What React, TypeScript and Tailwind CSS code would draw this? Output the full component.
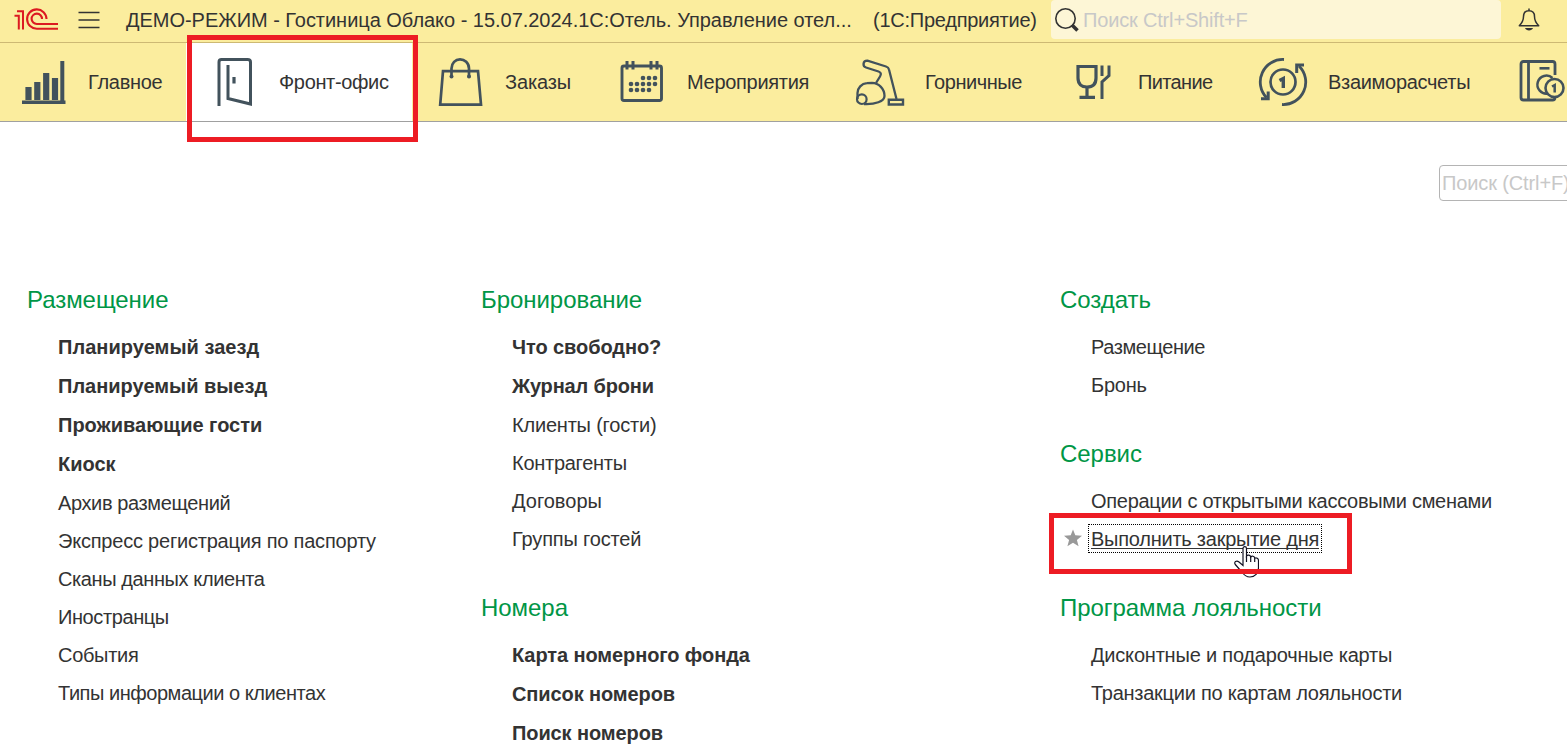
import type { ReactNode } from "react";

const ink = "#42525c";

type Tab = { label: string; width: string; icon: ReactNode; active?: boolean; text: string };

function Icon({ children }: { children?: ReactNode }) {
  return (
    <svg width="48" height="48" viewBox="0 0 48 48" fill="none" stroke={ink} strokeWidth="2" className="shrink-0 overflow-visible">
      {children}
    </svg>
  );
}

const tabs: Tab[] = [
  {
    label: "Главное",
    width: "w-[186px] pl-5",
    text: "ml-5 tracking-[-0.28px]",
    icon: (
      <Icon>
        <path d="M2 44.2H45.5" strokeWidth="3.6" />
        <path d="M42.3 3V46" strokeWidth="4" />
        <path d="M8.5 29V42M17.3 24V42M26.2 15V42M35 20V42" strokeWidth="6.2" />
      </Icon>
    ),
  },
  {
    label: "Фронт-офис",
    width: "w-[226px] pl-[25px]",
    text: "ml-5 tracking-[-0.35px]",
    active: true,
    icon: (
      <Icon>
        <path d="M8 48V4Q8 1.500 10.500 1.500H36.500Q39.500 1.500 39.500 4V46L17 40.500V7" strokeWidth="3" />
        <path d="M23 19V25.500" strokeWidth="3.200" />
      </Icon>
    ),
  },
  {
    label: "Заказы",
    width: "w-[182px] pl-[25px]",
    text: "ml-5 tracking-[-0.15px]",
    icon: (
      <Icon>
        <path d="M6 13.200H41L44 46.700H3.200Z" strokeWidth="2.700" />
        <path d="M14.500 19.500V10.500C14.500 5 18.500 1.300 23 1.300S32 5 32 10.500V19.500" strokeWidth="2.700" />
        <circle cx="14.500" cy="18.500" r="2" fill={ink} stroke="none" />
        <circle cx="32" cy="18.500" r="2" fill={ink} stroke="none" />
      </Icon>
    ),
  },
  {
    label: "Мероприятия",
    width: "w-[238px] pl-[25px]",
    text: "ml-5 tracking-[-0.3px]",
    icon: (
      <Icon>
        <rect x="3" y="8" width="39.500" height="34.500" rx="2" strokeWidth="2.900" />
        <path d="M8 3V11.500M14 3V11.500M32 3V11.500M38 3V11.500" strokeWidth="3" />
        {[
          [24, 20], [30, 20], [36, 20],
          [12, 26], [18, 26], [24, 26], [30, 26], [36, 26],
          [12, 32], [18, 32], [24, 32], [30, 32],
        ].map(([x, y]) => (
          <circle key={`${x}-${y}`} cx={x} cy={y} r="2.300" fill={ink} stroke="none" />
        ))}
      </Icon>
    ),
  },
  {
    label: "Горничные",
    width: "w-[213px] pl-[24px]",
    text: "ml-[21px] tracking-[-0.45px]",
    icon: (
      <Icon>
        <path d="M20 25L24 18.500C25.500 16 25 14.500 22.500 13.500L10 9.500C6.500 8.500 6.500 2.500 11.500 2.700L30 8.500Q32.500 9.300 33 11.500L40.500 41" strokeWidth="2.300" />
        <path d="M1.500 41V35C1.500 30 5.500 25.500 11 25.200L16 24.800C23 25 28.500 31 28.500 38C28.500 43.500 19 46.500 8 46" strokeWidth="2.300" />
        <circle cx="5.800" cy="41.200" r="4.800" strokeWidth="2.200" />
        <path d="M32.800 41.700H47V46.500H32.800Z" strokeWidth="2.400" />
      </Icon>
    ),
  },
  {
    label: "Питание",
    width: "w-[190px] pl-[25px]",
    text: "ml-5 tracking-[-0.65px]",
    icon: (
      <Icon>
        <path d="M8 8.500H26V20C26 26 22.500 29 17 29S8 26 8 20Z" strokeWidth="3.200" />
        <path d="M17 29V39M9.500 39.300H25" strokeWidth="3.200" />
        <path d="M32 7.500V18M39 7.500V17.500L32 24V41" strokeWidth="3" />
      </Icon>
    ),
  },
  {
    label: "Взаиморасчеты",
    width: "w-[259px] pl-[24px]",
    text: "ml-[21px] tracking-[-0.3px]",
    icon: (
      <Icon>
        <circle cx="24" cy="24" r="12.500" strokeWidth="2.700" />
        <path d="M25 1.500A22.500 22.500 0 0 0 7.500 39.500M23 46.500A22.500 22.500 0 0 0 40 8" strokeWidth="2.800" />
        <path d="M2 40.700H9.200V33.500" strokeWidth="3" />
        <path d="M37.700 15V7H45" strokeWidth="3" />
        <path d="M20.500 22.500L24.300 20.500V30" strokeWidth="3.400" />
      </Icon>
    ),
  },
  {
    label: "",
    width: "w-[73px] pl-[25px]",
    text: "",
    icon: (
      <Icon>
        <path d="M36 17V6Q36 3.500 33.500 3.500H4.500Q2 3.500 2 6V39.500Q2 42 4.500 42H33.500Q36 42 36 39.500V38M9.500 3.500V42" strokeWidth="2.800" />
        <path d="M20.500 10.300H30.500" strokeWidth="2.600" />
        <path d="M33.500 20A9 9 0 1 0 29 35.500" strokeWidth="2.500" />
        <circle cx="35.500" cy="30" r="9" fill="#fbed9e" strokeWidth="2.600" />
        <path d="M33 28.500L35.700 27V34.500" strokeWidth="2.500" />
      </Icon>
    ),
  },
];

type Item = { text: string; bold?: boolean; focused?: boolean; fit?: string };
type Group = { title: string; items: Item[] };

const columns: { width: string; groups: Group[] }[] = [
  {
    width: "w-[454px]",
    groups: [
      {
        title: "Размещение",
        items: [
          { text: "Планируемый заезд", bold: true, fit: "tracking-[0.04px]" },
          { text: "Планируемый выезд", bold: true },
          { text: "Проживающие гости", bold: true },
          { text: "Киоск", bold: true },
          { text: "Архив размещений", fit: "tracking-[-0.38px]" },
          { text: "Экспресс регистрация по паспорту", fit: "tracking-[-0.21px]" },
          { text: "Сканы данных клиента", fit: "tracking-[-0.4px]" },
          { text: "Иностранцы", fit: "tracking-[-0.4px]" },
          { text: "События", fit: "tracking-[-0.3px]" },
          { text: "Типы информации о клиентах", fit: "tracking-[-0.46px]" },
        ],
      },
    ],
  },
  {
    width: "w-[579px]",
    groups: [
      {
        title: "Бронирование",
        items: [
          { text: "Что свободно?", bold: true, fit: "tracking-[-0.08px]" },
          { text: "Журнал брони", bold: true, fit: "tracking-[-0.16px]" },
          { text: "Клиенты (гости)", fit: "tracking-[-0.2px]" },
          { text: "Контрагенты", fit: "tracking-[-0.27px]" },
          { text: "Договоры" },
          { text: "Группы гостей", fit: "tracking-[-0.16px]" },
        ],
      },
      {
        title: "Номера",
        items: [
          { text: "Карта номерного фонда", bold: true, fit: "tracking-[-0.09px]" },
          { text: "Список номеров", bold: true, fit: "tracking-[-0.1px]" },
          { text: "Поиск номеров", bold: true, fit: "tracking-[-0.1px]" },
        ],
      },
    ],
  },
  {
    width: "w-[507px]",
    groups: [
      {
        title: "Создать",
        items: [
          { text: "Размещение", fit: "tracking-[-0.43px]" },
          { text: "Бронь", fit: "tracking-[-0.2px]" },
        ],
      },
      {
        title: "Сервис",
        items: [
          { text: "Операции с открытыми кассовыми сменами", fit: "tracking-[-0.29px]" },
          { text: "Выполнить закрытие дня", focused: true },
        ],
      },
      {
        title: "Программа лояльности",
        items: [
          { text: "Дисконтные и подарочные карты", fit: "tracking-[-0.2px]" },
          { text: "Транзакции по картам лояльности", fit: "tracking-[-0.26px]" },
        ],
      },
    ],
  },
];

function Logo() {
  return (
    <svg width="46" height="24" viewBox="0 0 46 24" fill="none" stroke="#dc1a21" className="shrink-0">
      <path d="M0.500 7.800H4.800V21.500M3 3.200H9V21.500" strokeWidth="2" />
      <path d="M32.500 11A9.700 9.700 0 1 0 23 20.800H44" strokeWidth="2.100" />
      <path d="M28 11A5.200 5.200 0 1 0 23 16H44" strokeWidth="2.100" />
    </svg>
  );
}

function MenuItem({ item }: { item: Item }) {
  if (item.focused) {
    return (
      <li className="relative flex h-[38px] items-center">
        <svg width="18" height="18" viewBox="0 0 18 18" className="absolute -left-[27px] top-[9px]" fill="#999">
          <path d="M9 0.500L11.300 6.300L18 6.700L12.900 10.900L14.600 17.300L9 13.700L3.400 17.300L5.100 10.900L0 6.700L6.700 6.300Z" />
        </svg>
        <span className="relative whitespace-nowrap tracking-[-0.24px]">
          {item.text}
          <span className="absolute inset-x-0 top-[19px] h-px bg-[#333]" />
        </span>
        <span className="absolute -left-[3px] top-[4px] h-[29px] w-[234px] border border-dotted border-black" />
        <svg width="26" height="34" viewBox="0 0 26 34" className="absolute left-[142px] top-[25px]" fill="#fff" stroke="#111122" strokeWidth="1.200">
          <path d="M10 17V3.500C10 1 13.500 1 13.500 3.500V11C14.500 9.500 17.500 9.700 17.700 12C19 10.700 21.500 11 21.700 13.200C23.500 12.500 25.500 13.500 25.500 15.500V23C25.500 28 22 32 17 32C12.500 32 10.500 29.500 8.500 26.500L2.300 19.500C0.500 17 3.500 15 6 17L10 20.500Z" />
          <path d="M13.500 11V17M17.700 12V17M21.700 13.200V17" fill="none" />
        </svg>
        <span className="absolute -left-[42px] -top-[7px] h-[61px] w-[303px] border-[5px] border-[#ed1c24]" />
      </li>
    );
  }
  return (
    <li
      className={`flex items-center whitespace-nowrap ${item.bold ? "h-[39px] pb-[2px] font-bold" : "h-[38px]"} ${item.fit ?? ""}`}
    >
      {item.text}
    </li>
  );
}

export default function App() {
  return (
    <div className="h-[751px] w-[1567px] overflow-hidden bg-white font-['Liberation_Sans',Arial,sans-serif] text-[20px] leading-none text-[#333]">
      <header className="flex h-[43px] items-center border-b border-[#cdb974] bg-[#fbed9e] pb-[3px]">
        <div className="flex w-[126px] shrink-0 items-center pl-[14px]">
          <Logo />
          <svg width="22" height="18" viewBox="0 0 22 18" stroke="#333" strokeWidth="1.500" className="ml-[18px]">
            <path d="M0.500 1.500H21.500M0.500 9H21.500M0.500 16.500H21.500" />
          </svg>
        </div>
        <div className="w-[747px] shrink-0 whitespace-nowrap tracking-[-0.03px]">
          ДЕМО-РЕЖИМ - Гостиница Облако - 15.07.2024.1С:Отель. Управление отел...
        </div>
        <div className="w-[178px] shrink-0 whitespace-nowrap tracking-[-0.25px]">(1С:Предприятие)</div>
        <div className="flex h-[39px] w-[450px] shrink-0 items-center rounded-[4px] bg-[#fdf6d6] text-[#c8c8c8]">
          <svg width="24" height="24" viewBox="0 0 24 24" fill="none" stroke="#333" className="ml-1 shrink-0">
            <circle cx="10.500" cy="10.500" r="9.700" strokeWidth="1.600" />
            <path d="M17 17L22.500 22.500" strokeWidth="3.500" />
          </svg>
          <span className="ml-[4px] whitespace-nowrap tracking-[-0.17px]">Поиск Ctrl+Shift+F</span>
        </div>
        <svg width="22" height="24" viewBox="0 0 22 24" fill="none" stroke="#333" strokeWidth="1.500" className="ml-[17px] shrink-0">
          <path d="M1.300 17.700C4 15 5.500 12 5.500 8.500C5.500 5 7.500 2.700 11 2.700S16.500 5 16.500 8.500C16.500 12 18 15 20.700 17.700Z" strokeLinejoin="round" />
          <path d="M11 0.500V2.500" />
          <path d="M7 20H15C14 23.300 8 23.300 7 20Z" fill="#333" stroke="none" />
        </svg>
      </header>

      <nav className="relative flex h-[79px] border-b border-[#a0a0a0] bg-[#fbed9e]">
        {tabs.map((tab, i) => (
          <div key={i} className={`flex shrink-0 items-center ${tab.width} ${tab.active ? "bg-white" : ""}`}>
            {tab.icon}
            {tab.label && <span className={`whitespace-nowrap ${tab.text}`}>{tab.label}</span>}
          </div>
        ))}
        <span className="absolute -top-[8px] left-[187px] h-[107px] w-[231px] border-[5px] border-[#ed1c24]" />
      </nav>

      <main>
        <div className="flex h-[150px] justify-end pt-[43px]">
          <div className="-mr-[5px] flex h-[36px] w-[133px] items-center rounded-[4px] border border-[#b4b4b4] pl-[2px] text-[#c8c8c8]">
            <span className="whitespace-nowrap tracking-[-0.12px]">Поиск (Ctrl+F)</span>
          </div>
        </div>
        <div className="flex items-start pl-[27px]">
          {columns.map((col, i) => (
            <div key={i} className={`flex shrink-0 flex-col gap-[22px] ${col.width}`}>
              {col.groups.map((g) => (
                <section key={g.title}>
                  <h2 className="flex h-[56px] items-center text-[24px] leading-none tracking-[-0.05px] text-[#009646]">{g.title}</h2>
                  <ul className="pl-[31px]">
                    {g.items.map((item) => (
                      <MenuItem key={item.text} item={item} />
                    ))}
                  </ul>
                </section>
              ))}
            </div>
          ))}
        </div>
      </main>
    </div>
  );
}
